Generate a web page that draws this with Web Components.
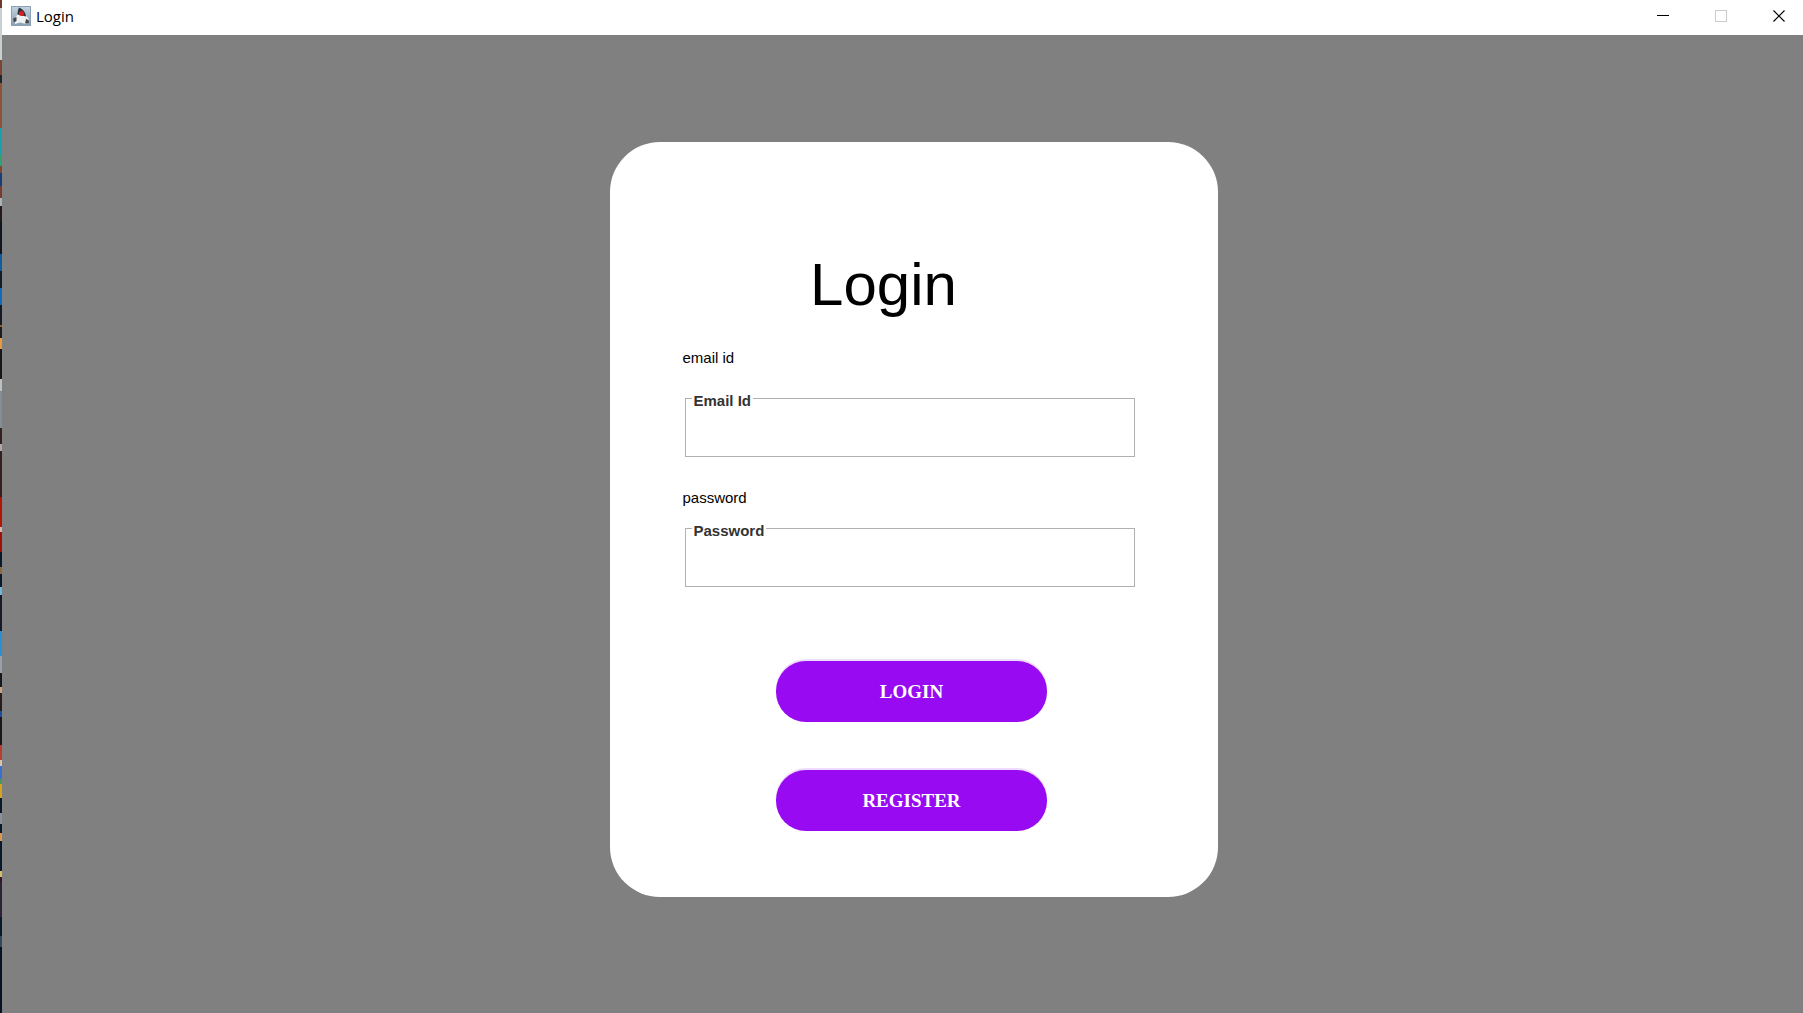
<!DOCTYPE html>
<html lang="en">
<head>
<meta charset="utf-8">
<title>Login</title>
<style>
html, body { height: 100%; margin: 0; }
body { background: #808080; font-family: "Liberation Sans", Arial, sans-serif; font-size: 15px; line-height: 17px; color: #000; }
</style>
</head>
<body>
<app-window>
  <title-bar slot="title">Login</title-bar>
  <login-card>
    <span slot="heading">Login</span>
    <titled-field type="email" caption="email id" style="--caption-gap: 22px">Email Id</titled-field>
    <titled-field type="password" caption="password" style="--caption-gap: 12px">Password</titled-field>
    <pill-button slot="actions">LOGIN</pill-button>
    <pill-button slot="actions">REGISTER</pill-button>
  </login-card>
</app-window>
<script>
function define(name, html, init) {
  customElements.define(name, class extends HTMLElement {
    constructor() {
      super();
      this.attachShadow({ mode: "open" }).innerHTML = html;
    }
    connectedCallback() { if (init) init(this, this.shadowRoot); }
  });
}

define("app-window", `
<style>
  :host { display: flex; min-height: 100%; }
  .edge { flex: 0 0 2px; background: linear-gradient(
    #6e3a2c 0 8px, #c9d0d2 8px 60px, #7b452f 60px 75px, #20242c 75px 83px, #8b5437 83px 128px,
    #18a3aa 128px 155px, #2fa173 155px 166px, #83462f 166px 173px, #173d78 173px 186px,
    #793a30 186px 198px, #a8b4b8 198px 206px, #241a1e 206px 221px, #10161f 221px 254px,
    #0f5d9e 254px 271px, #131b25 271px 288px, #0d6cbb 288px 305px, #151a22 305px 325px,
    #a45b1d 325px 327px, #1a1c22 327px 338px, #e59a3d 338px 349px, #171518 349px 379px,
    #bac2c5 379px 391px, #858e94 391px 428px, #34211f 428px 444px, #b0a9a8 444px 451px,
    #34211f 451px 497px, #b21405 497px 527px, #d4b5b0 527px 532px, #9e1005 532px 552px,
    #0b1a29 552px 567px, #8b6a3c 567px 574px, #0b1a29 574px 587px, #6fb4da 587px 595px,
    #171a26 595px 631px, #2491d8 631px 656px, #9ba1a8 656px 673px, #15171d 673px 687px,
    #c9a27c 687px 693px, #2a1c1b 693px 711px, #1b4f9e 711px 717px, #1a1719 717px 745px,
    #b93c30 745px 760px, #d9c5ae 760px 766px, #3b6ed2 766px 779px, #439b59 779px 784px,
    #d6a21f 784px 798px, #071a2b 798px 813px, #8a9198 813px 824px, #071a2b 824px 833px,
    #e0954a 833px 841px, #071a2b 841px 871px, #d6bd67 871px 877px, #35162b 877px 882px,
    #2b2335 882px 917px, #071a2b 917px 936px, #32495d 936px 947px, #04131f 947px); }
  .frame { flex: 1; display: flex; flex-direction: column; min-height: 100vh; }
  main { flex: 1; display: grid; justify-items: center; align-content: start; padding: 107px 0 48px 22px; box-sizing: border-box; }
</style>
<div class="edge"></div>
<div class="frame"><slot name="title"></slot><main><slot></slot></main></div>`);

define("title-bar", `
<style>
  :host { display: flex; align-items: center; height: 35px; padding-left: 9px; background: #fff; font: 15px/20px "Open Sans", "Noto Sans", sans-serif; }
  .app { width: 20px; height: 20px; margin: 0 5px 3px 0; }
  .name { flex: 1; margin-bottom: 4px; }
  button { width: 48px; height: 35px; padding: 0 0 4px; border: 0; background: none; display: grid; place-items: center; }
  .controls { display: flex; gap: 10px; }
</style>
<svg class="app" viewBox="0 0 20 20" aria-hidden="true">
  <defs><linearGradient id="g" x2="0" y2="1"><stop stop-color="#c3d2de"/><stop offset="1" stop-color="#86a0b6"/></linearGradient></defs>
  <rect x=".5" y=".5" width="19" height="19" fill="url(#g)" stroke="#8ba0b2"/>
  <path d="M8.500 2 7 8 3 13l1 5 5-1.500 6 1.500 3-4.500-3-4Z" fill="#eef0f1"/>
  <path d="M8 1.500C7 4 6.500 6 6.500 8.500l8.500 2C14.500 6.500 12 3 8 1.500Z" fill="#2e3236"/>
  <path d="M2 12.500 5.500 11v4L3 16.500ZM15 13l2.500 1 .5 3-4 .5Z" fill="#43494e"/>
  <circle cx="10.500" cy="7.500" r="2.500" fill="#db2025"/>
</svg>
<span class="name"><slot></slot></span>
<div class="controls">
  <button type="button" aria-label="Minimize"><svg width="12" height="12"><path d="M0 5.500h12" stroke="#000"/></svg></button>
  <button type="button" aria-label="Maximize" disabled><svg width="12" height="12"><rect x=".5" y=".5" width="11" height="11" fill="none" stroke="#ccc"/></svg></button>
  <button type="button" aria-label="Close"><svg width="12" height="12"><path d="m.5.500 11 11m0-11-11 11" stroke="#000" stroke-width="1.200"/></svg></button>
</div>`);

define("login-card", `
<style>
  :host { display: block; box-sizing: border-box; width: 100%; max-width: 608px; padding: 108px 81px 66px 73px; border-radius: 50px; background: #fff; }
  h1 { margin: 0; padding-right: 52px; font-size: 60px; line-height: 69px; font-weight: 400; text-align: center; }
  .fields { display: grid; gap: 32px; margin-top: 30px; }
  .actions { display: grid; gap: 48px; justify-items: center; margin-top: 74px; padding-left: 4px; }
</style>
<h1><slot name="heading"></slot></h1>
<form>
  <div class="fields"><slot></slot></div>
  <div class="actions"><slot name="actions"></slot></div>
</form>`);

define("titled-field", `
<style>
  :host { display: flex; flex-direction: column; gap: var(--caption-gap); }
  fieldset { display: grid; box-sizing: border-box; height: 69px; min-width: 0; margin: 0 2px; padding: 0 6px; border: 1px solid #b0b0b0; }
  legend { padding: 4px 2px 0; font-weight: 700; color: #333; }
  input { min-width: 0; width: 100%; padding: 0; border: 0; outline: 0; background: none; font: inherit; }
</style>
<label for="value"></label>
<fieldset><legend><slot></slot></legend><input id="value"></fieldset>`,
(host, root) => {
  root.querySelector("label").textContent = host.getAttribute("caption");
  root.querySelector("input").type = host.getAttribute("type");
});

define("pill-button", `
<style>
  :host { display: block; width: 271px; }
  button { display: block; width: 100%; height: 61px; padding: 0; border: 0; border-radius: 30px; background: #970af2; box-shadow: 0 -2px 0 #efdcfc; color: #fff; font: 700 19px/22px "Liberation Serif", "Times New Roman", serif; }
</style>
<button type="button"><slot></slot></button>`);
</script>
</body>
</html>
